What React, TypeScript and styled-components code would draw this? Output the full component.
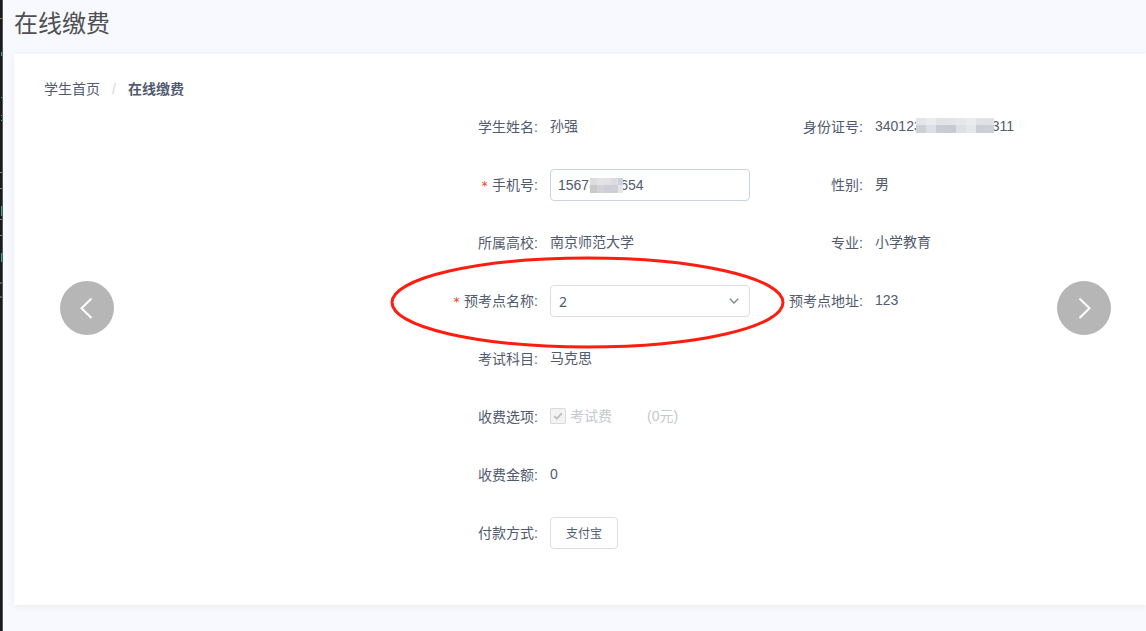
import React from "react";
import styled, { createGlobalStyle } from "styled-components";

const GlobalStyle = createGlobalStyle`
  *, *::before, *::after { box-sizing: border-box; }
  body {
    margin: 0;
    background: #f8f9fe;
    color: #515a6e;
    font-family: "Liberation Sans", "Noto Sans CJK SC", sans-serif;
    font-size: 14px;
    overflow-x: hidden;
  }
  button, input, select { font: inherit; color: inherit; margin: 0; }
`;

const Page = styled.div`
  display: flex;
  min-height: 100vh;
`;

const EdgeStrip = styled.div`
  flex: none;
  width: 3px;
  background: #1b1b1d;
  border-right: 1px solid #55565a;
  overflow: hidden;
  svg { display: block; }
`;

const Main = styled.main`
  flex: 1;
  min-width: 0;
  padding: 0 0 26px 11px;
`;

const Title = styled.h1`
  margin: 0;
  height: 54px;
  padding-top: 6px;
  font-size: 24px;
  line-height: 36px;
  font-weight: 400;
  color: #505054;
`;

const Card = styled.section`
  position: relative;
  padding: 25px 30px 32px;
  background: #fff;
  box-shadow: 0 1px 8px rgba(0, 0, 0, 0.06);
`;

const Breadcrumb = styled.nav`
  display: flex;
  line-height: 20px;
  margin-bottom: 10px;
  a { color: inherit; text-decoration: none; }
  strong { font-weight: 700; }
`;

const Separator = styled.span`
  width: 28px;
  text-align: center;
  color: #d3d7e0;
`;

const Form = styled.form`
  display: grid;
  grid-template-columns: 325px 353px;
  justify-content: end;
`;

const Column = styled.div`
  display: flex;
  flex-direction: column;
`;

const Field = styled.div`
  display: flex;
  height: 58px;
`;

const fieldLabel = `
  flex: none;
  width: 112px;
  padding-right: 12px;
  text-align: right;
  line-height: 36px;
  white-space: nowrap;
`;

const Label = styled.label`${fieldLabel}`;
const Caption = styled.span`${fieldLabel}`;

const Star = styled.span`
  margin-right: 4px;
  color: #ed3f14;
  font-family: "DejaVu Sans Mono", monospace;
  font-size: 12px;
`;

const Value = styled.span`
  position: relative;
  height: 34px;
  line-height: 34px;
  white-space: nowrap;
`;

const Control = styled.div`
  position: relative;
  width: 200px;
  height: 32px;
  margin-top: 2px;
`;

const TextInput = styled.input`
  width: 100%;
  height: 32px;
  padding: 0 7px;
  border: 1px solid #c8d3e2;
  border-radius: 4px;
  background: #fff;
  outline: none;
`;

const Select = styled.select`
  appearance: none;
  display: block;
  width: 100%;
  height: 32px;
  padding: 0 24px 0 8px;
  border: 1px solid #dcdee2;
  border-radius: 4px;
  background: #fff;
  outline: none;
  font-family: "Noto Sans", "Noto Sans CJK SC", sans-serif;
`;

const Chevron = styled.svg`
  position: absolute;
  right: 10px;
  top: 11px;
  pointer-events: none;
`;

const Highlight = styled.svg`
  position: absolute;
  left: -161px;
  top: -29px;
  z-index: 1;
  pointer-events: none;
`;

const Mask = styled.svg<{ $left: number; $top: number }>`
  position: absolute;
  left: ${(p) => p.$left}px;
  top: ${(p) => p.$top}px;
  pointer-events: none;
`;

const Option = styled.label`
  display: flex;
  align-items: center;
  height: 34px;
  line-height: 34px;
  color: #c5c8ce;
`;

const CheckWrap = styled.span`
  position: relative;
  width: 16px;
  height: 16px;
  margin-right: 4px;
  svg { position: absolute; left: 0; top: 0; }
`;

const Checkbox = styled.input`
  appearance: none;
  display: block;
  width: 16px;
  height: 16px;
  border: 1px solid #d8dade;
  border-radius: 2px;
  background: #f3f3f3;
`;

const Price = styled.span`
  margin-left: 35px;
`;

const PayButton = styled.button`
  width: 68px;
  height: 32px;
  margin-top: 2px;
  padding: 0 0 2px;
  border: 1px solid #dcdee2;
  border-radius: 4px;
  background: #fff;
  font-size: 12px;
`;

const Arrow = styled.button<{ $side: "left" | "right" }>`
  position: absolute;
  top: 227px;
  ${(p) => (p.$side === "left" ? "left: 46px;" : "right: 35px;")}
  width: 54px;
  height: 54px;
  padding: 0;
  border: 0;
  border-radius: 50%;
  background: #b6b6b6;
  svg { display: block; }
`;

type MosaicProps = { left: number; top: number; width: number; rows: string[][]; cell: number };

function Mosaic({ left, top, width, rows, cell }: MosaicProps) {
  return (
    <Mask $left={left} $top={top} width={width} height={15} shapeRendering="crispEdges" aria-hidden="true">
      {rows.map((row, y) =>
        row.map((fill, x) => (
          <rect key={`${x}-${y}`} x={x * cell} y={y * 7} width={cell} height={8} fill={fill} />
        ))
      )}
    </Mask>
  );
}

const idMask = [
  ["#e4e5e7", "#eaebed", "#e2e3e6", "#e3e4e7", "#e6e7e9", "#ebebed", "#dfe1e4", "#e0e1e4"],
  ["#cfd0d4", "#dcdfe4", "#c9ccd2", "#c7cad0", "#dfe0e3", "#e6e7ea", "#cbced4", "#cdcfd4"],
];
const phoneMask = [
  ["#dddde0", "#e3e3e5", "#e2e2e4", "#dcdce0", "#cfd1da"],
  ["#c9c9cc", "#d2d3d7", "#cccfd5", "#cdd0d8", "#e7e5e7"],
];

const edgeMarks: [number, number, string][] = [
  [18, 1, "#b5654a"], [52, 4, "#3fa392"], [97, 1, "#3fa392"], [115, 1, "#3fa392"],
  [120, 1, "#3fa392"], [172, 1, "#85868a"], [188, 1, "#85868a"], [206, 10, "#3fa392"],
  [219, 1, "#85868a"], [235, 1, "#85868a"], [253, 9, "#3fa392"], [282, 2, "#55565a"],
  [296, 2, "#55565a"],
];

export default function App() {
  return (
    <>
      <GlobalStyle />
      <Page>
        <EdgeStrip aria-hidden="true">
          <svg width="2" height="300">
            {edgeMarks.map(([y, h, fill]) => (
              <rect key={y} x={fill === "#3fa392" ? 1 : 0} y={y} width="2" height={h} fill={fill} />
            ))}
          </svg>
        </EdgeStrip>
        <Main>
          <Title>在线缴费</Title>
          <Card>
            <Breadcrumb aria-label="breadcrumb">
              <a href="#home">学生首页</a>
              <Separator>/</Separator>
              <strong>在线缴费</strong>
            </Breadcrumb>
            <Form onSubmit={(e) => e.preventDefault()}>
              <Column>
                <Field>
                  <Caption>学生姓名:</Caption>
                  <Value>孙强</Value>
                </Field>
                <Field>
                  <Label htmlFor="phone"><Star>*</Star>手机号:</Label>
                  <Control>
                    <TextInput id="phone" defaultValue="15678000654" />
                    <Mosaic left={40} top={9} width={33} rows={phoneMask} cell={7} />
                  </Control>
                </Field>
                <Field>
                  <Caption>所属高校:</Caption>
                  <Value>南京师范大学</Value>
                </Field>
                <Field>
                  <Label htmlFor="site"><Star>*</Star>预考点名称:</Label>
                  <Control>
                    <Select id="site" defaultValue="2">
                      <option value="2">2</option>
                    </Select>
                    <Chevron width="12" height="10" viewBox="0 0 12 10" fill="none" stroke="#80869a" strokeWidth="1.3">
                      <path d="M1.8 2.8 6 7l4.2-4.2" />
                    </Chevron>
                    <Highlight width="398" height="94" fill="none" aria-hidden="true">
                      <ellipse cx="198.5" cy="46.5" rx="195.5" ry="44.5" stroke="#ff1d0f" strokeWidth="3" />
                    </Highlight>
                  </Control>
                </Field>
                <Field>
                  <Caption>考试科目:</Caption>
                  <Value>马克思</Value>
                </Field>
                <Field>
                  <Caption>收费选项:</Caption>
                  <Option>
                    <CheckWrap>
                      <Checkbox type="checkbox" defaultChecked disabled />
                      <svg width="16" height="16" fill="none" stroke="#c0c2c6" strokeWidth="2">
                        <path d="M4.2 8.2 6.8 10.6 11.8 5.2" />
                      </svg>
                    </CheckWrap>
                    考试费
                    <Price>(0元)</Price>
                  </Option>
                </Field>
                <Field>
                  <Caption>收费金额:</Caption>
                  <Value>0</Value>
                </Field>
                <Field>
                  <Caption>付款方式:</Caption>
                  <PayButton type="button">支付宝</PayButton>
                </Field>
              </Column>
              <Column>
                <Field>
                  <Caption>身份证号:</Caption>
                  <Value>
                    340123000000000311
                    <Mosaic left={41} top={9} width={78} rows={idMask} cell={10} />
                  </Value>
                </Field>
                <Field>
                  <Caption>性别:</Caption>
                  <Value>男</Value>
                </Field>
                <Field>
                  <Caption>专业:</Caption>
                  <Value>小学教育</Value>
                </Field>
                <Field>
                  <Caption>预考点地址:</Caption>
                  <Value>123</Value>
                </Field>
              </Column>
            </Form>
            <Arrow $side="left" type="button" aria-label="上一页">
              <svg width="54" height="54" fill="none" stroke="#fff" strokeWidth="2">
                <path d="M31.5 17.5 21.5 27.2 31.5 37" />
              </svg>
            </Arrow>
            <Arrow $side="right" type="button" aria-label="下一页">
              <svg width="54" height="54" fill="none" stroke="#fff" strokeWidth="2">
                <path d="M22.5 17.5 32.5 27.2 22.5 37" />
              </svg>
            </Arrow>
          </Card>
        </Main>
      </Page>
    </>
  );
}
